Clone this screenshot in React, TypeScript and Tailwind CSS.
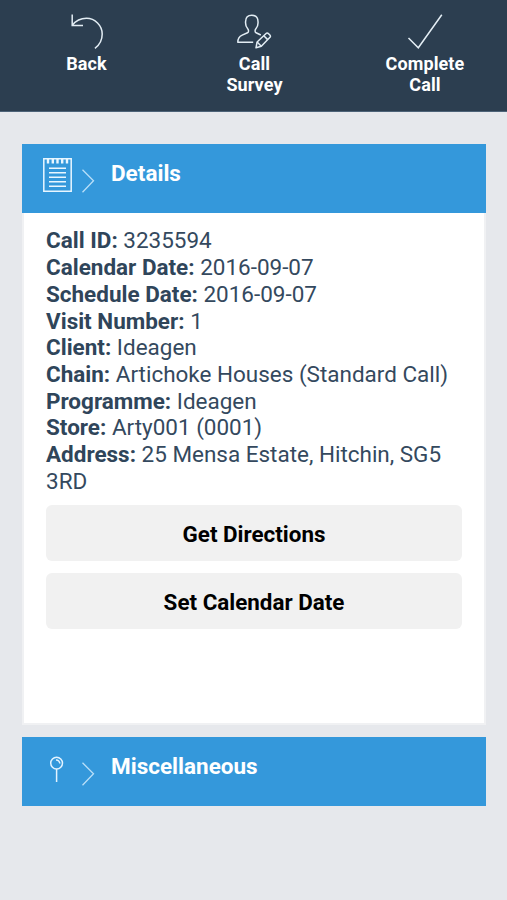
import type { ReactNode } from "react";

const details = [
  ["Call ID", "3235594"],
  ["Calendar Date", "2016-09-07"],
  ["Schedule Date", "2016-09-07"],
  ["Visit Number", "1"],
  ["Client", "Ideagen"],
  ["Chain", "Artichoke Houses (Standard Call)"],
  ["Programme", "Ideagen"],
  ["Store", "Arty001 (0001)"],
  ["Address", "25 Mensa Estate, Hitchin, SG5 3RD"],
];

function BackIcon() {
  return (
    <svg width="40" height="40" viewBox="0 0 40 40" fill="none" stroke="#e3edf4" strokeWidth="1.5" aria-hidden="true">
      <path d="M5.2 1.5V12.5H16" />
      <path d="M5.4 12.2C9 7.5 14 5.3 19.5 5.3C28 5.3 35.2 12.5 35.2 21C35.2 27.2 32.8 31.8 27.9 35.3" />
    </svg>
  );
}

function SurveyIcon() {
  return (
    <svg width="40" height="40" viewBox="0 0 40 40" fill="none" stroke="#e3edf4" strokeWidth="1.5" strokeLinejoin="round" aria-hidden="true">
      <path d="M18.2 29.3H2.8C2.8 25.3 3.7 23.6 7.2 22.1L12.5 19.8C13.9 19.1 13.8 17 12.7 15.8C10.9 13.8 10.3 12 10.6 8.5C10.7 4.3 12.6 2.3 16.8 2.3C21 2.3 22.9 4.3 23 8.5C23.3 12 22.7 13.8 20.9 15.8C19.8 17 19.7 19.1 21.1 19.8L25.8 22" />
      <path d="M21 34.8L22.1 29L31.4 20.2C32.5 19.2 36.3 22.7 35.2 24L26.3 33.2Z" />
      <path d="M22.1 29L26.3 33.2M28.8 22.7L32.7 26.6" />
    </svg>
  );
}

function CheckIcon() {
  return (
    <svg width="40" height="40" viewBox="0 0 40 40" fill="none" stroke="#e3edf4" strokeWidth="1.5" aria-hidden="true">
      <path d="M3.5 25L13.3 34.8L36.8 1.7" />
    </svg>
  );
}

function NotepadIcon() {
  return (
    <svg width="30" height="36" viewBox="0 0 30 36" fill="none" stroke="#e8f6ff" strokeWidth="1.5" aria-hidden="true">
      <path d="M0.8 1.8H28.2V34.2H0.8Z" />
      <path d="M5 1V6.5M9.8 1V6.5M14.5 1V6.5M19.2 1V6.5M24 1V6.5" strokeWidth="2.4" />
      <path d="M6 11.3H23M6 15.8H23M6 20.3H23M6 24.8H23M6 29.2H23" />
    </svg>
  );
}

function PinIcon() {
  return (
    <svg width="30" height="36" viewBox="0 0 30 36" fill="none" stroke="#e3f3ff" strokeWidth="1.5" aria-hidden="true">
      <circle cx="13.6" cy="13.1" r="5.9" />
      <path d="M13.6 19V32M13 9.9A3.6 3.6 0 0 1 16.8 13.6" />
    </svg>
  );
}

function NavButton({ icon, className, children }: { icon: ReactNode; className: string; children: ReactNode }) {
  return (
    <button type="button" className={`flex shrink-0 flex-col items-center pt-[13px] text-[18px] leading-[21px] font-bold tracking-[0.1px] text-white ${className}`}>
      {icon}
      <span>{children}</span>
    </button>
  );
}

function SectionHeader({ icon, title }: { icon: ReactNode; title: string }) {
  return (
    <button type="button" className="flex h-[69px] w-full items-start bg-[#3498db] pl-[21px] text-left text-white">
      <span className="mt-[13px]">{icon}</span>
      <svg className="mt-[25px] ml-[9px]" width="13" height="25" viewBox="0 0 13 25" fill="none" stroke="#b9dff8" strokeWidth="1.3" aria-hidden="true">
        <path d="M0.5 0.7L11.5 11.8L0.5 23.3" />
      </svg>
      <span className="mt-4 ml-4 text-[22.5px] leading-[27px] font-bold">{title}</span>
    </button>
  );
}

export default function App() {
  return (
    <div className="min-h-[900px] w-full bg-[#e6e8ec] font-['Roboto',sans-serif]">
      <header className="flex h-28 border-b border-[#4d6378] bg-[#2c3e50]">
        <NavButton icon={<BackIcon />} className="w-[173px]">Back</NavButton>
        <NavButton icon={<SurveyIcon />} className="w-[163px]">Call<br />Survey</NavButton>
        <NavButton icon={<CheckIcon />} className="w-[171px] pl-[7px]">Complete<br />Call</NavButton>
      </header>

      <main className="pt-8 pr-[21px] pl-[22px]">
        <section>
          <SectionHeader icon={<NotepadIcon />} title="Details" />
          <div className="h-[512px] border-2 border-t-0 border-[#f0f1f3] bg-white px-[22px] pt-[14.4px]">
            <div className="text-[22.48px] leading-[26.7px] text-[#34495e]">
              {details.map(([label, value]) => (
                <p key={label}>
                  <b className="text-[#2f455a]">{label}:</b> {value}
                </p>
              ))}
            </div>
            <div className="mt-[10.6px] flex flex-col gap-3 text-[22.4px] font-bold text-black">
              <button type="button" className="h-14 rounded-md bg-[#f1f1f1] pt-[3px]">Get Directions</button>
              <button type="button" className="h-14 rounded-md bg-[#f1f1f1] pt-[3px]">Set Calendar Date</button>
            </div>
          </div>
        </section>

        <section className="mt-3">
          <SectionHeader icon={<PinIcon />} title="Miscellaneous" />
        </section>
      </main>
    </div>
  );
}
